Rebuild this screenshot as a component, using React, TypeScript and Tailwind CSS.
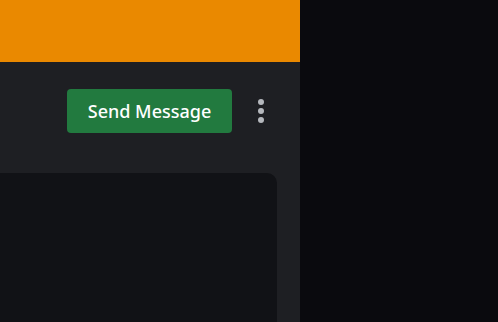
export default function App() {
  return (
    <div className="flex h-[322px] w-[498px] overflow-hidden bg-[#0a0a0e]" style={{ fontFamily: '"Noto Sans", "Open Sans", sans-serif' }}>
      {/* Profile column */}
      <div className="flex w-[300px] shrink-0 flex-col bg-[#1e1f23]">
        <div className="h-[62px] shrink-0 bg-[#ea8900]" />
        <div className="flex items-center justify-end gap-[26px] pr-[36px] pt-[27px]">
          <button className="flex h-[44px] w-[165px] items-center justify-center rounded-[4px] bg-[#227a3f] text-[18px] font-medium text-white">
            Send Message
          </button>
          <div className="flex flex-col gap-[3px]">
            <span className="h-[6px] w-[6px] rounded-full bg-[#b5b8bd]" />
            <span className="h-[6px] w-[6px] rounded-full bg-[#b5b8bd]" />
            <span className="h-[6px] w-[6px] rounded-full bg-[#b5b8bd]" />
          </div>
        </div>
        <div className="mt-[40px] mr-[23px] flex-1 rounded-tr-[10px] bg-[#111216]" />
      </div>
    </div>
  );
}
